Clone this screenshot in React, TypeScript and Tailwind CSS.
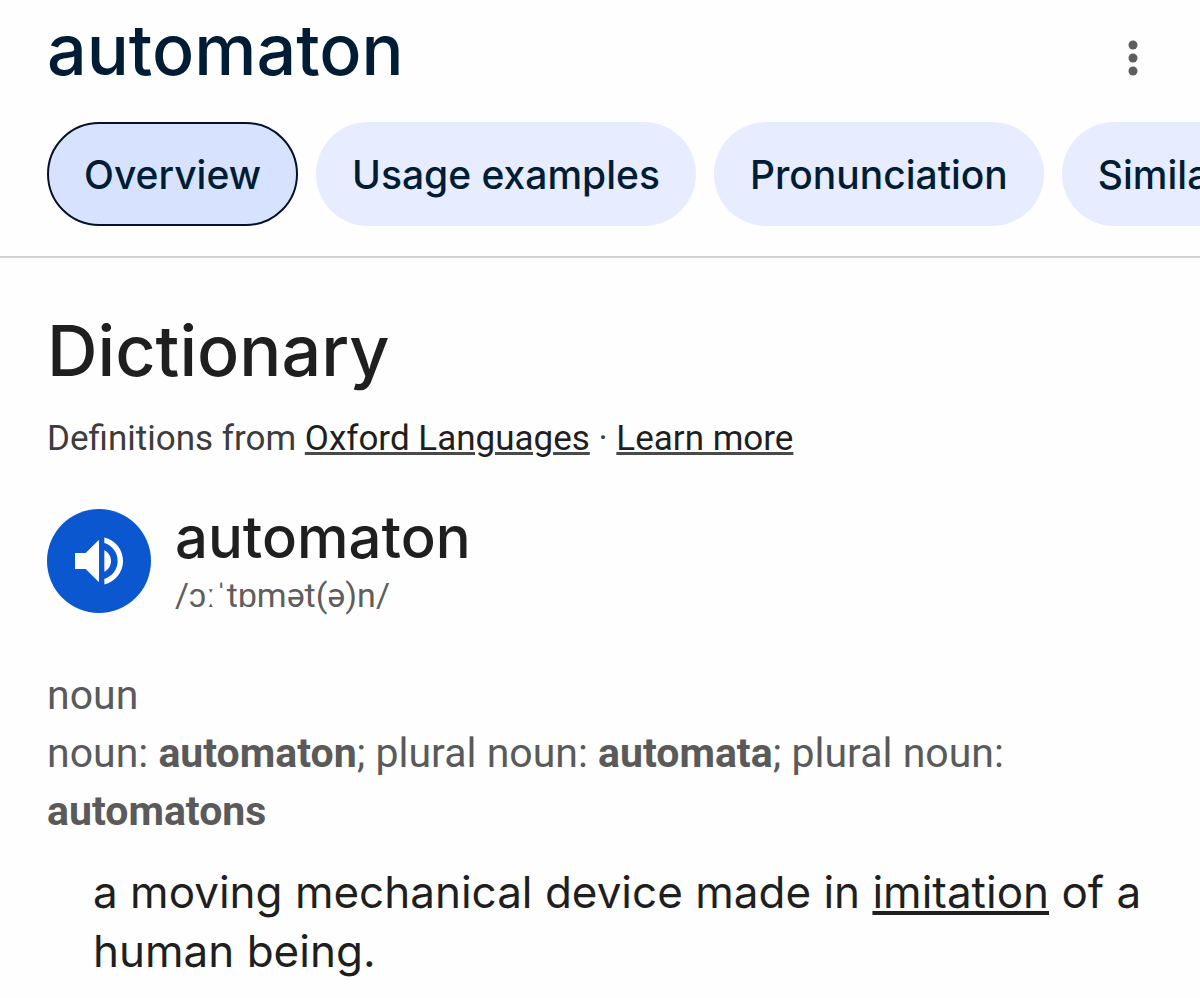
import React from "react";

const chips = ["Overview", "Usage examples", "Pronunciation", "Similar words"];

export default function App() {
  return (
    <div className="min-h-screen overflow-hidden bg-[#fefefe] font-['Roboto',sans-serif] text-[#1f1f1f]">
      <header className="border-b-2 border-[#d2d2d4] pb-[30px]">
        <div className="flex items-center justify-between pt-2 pr-[49px] pl-[47px]">
          <h1 className="font-['Inter',sans-serif] text-[70px] leading-[84px] font-medium text-[#001d35]">automaton</h1>
          <button aria-label="More options" className="mt-4 flex h-12 w-9 items-center justify-center text-[#5e5e5e]">
            <svg width="12" height="40" viewBox="0 0 12 40" fill="currentColor">
              <circle cx="6" cy="7" r="4.5" />
              <circle cx="6" cy="20" r="4.5" />
              <circle cx="6" cy="33" r="4.5" />
            </svg>
          </button>
        </div>
        <nav className="mt-[30px] flex gap-[18px] overflow-hidden pl-[47px]">
          {chips.map((chip, i) => (
            <button
              key={chip}
              className={
                i === 0
                  ? "h-[104px] shrink-0 rounded-full border-2 border-[#05112b] bg-[#d7e2fe] px-[35px] pt-[2px] font-['Inter',sans-serif] text-[39px] font-medium text-[#001d35]"
                  : "h-[104px] shrink-0 rounded-full bg-[#e7ecff] px-9 pt-[2px] font-['Inter',sans-serif] text-[39px] font-medium text-[#001d35]"
              }
            >
              {chip}
            </button>
          ))}
        </nav>
      </header>
      <main className="px-[47px]">
        <h2 className="mt-[51px] font-['Inter',sans-serif] text-[70px] leading-[84px] font-medium">Dictionary</h2>
        <p className="mt-6 text-[35px] leading-[44px] text-[#3c3c3c]">
          Definitions from <a href="#oxford" className="text-[#1f1f1f] underline decoration-[#4a4a4a] decoration-3">Oxford Languages</a> · <a href="#more" className="text-[#1f1f1f] underline decoration-[#4a4a4a] decoration-3">Learn more</a>
        </p>
        <section className="mt-11 flex items-center gap-6">
          <button aria-label="Listen" className="flex size-[104px] items-center justify-center rounded-full bg-[#0b57d0] text-white">
            <svg width="64" height="64" viewBox="0 0 24 24" fill="currentColor">
              <path d="M3 9v6h4l5 5V4L7 9H3zm13.5 3c0-1.77-1.02-3.29-2.5-4.03v8.05c1.48-.73 2.5-2.25 2.5-4.02zM14 3.23v2.06c2.89.86 5 3.54 5 6.71s-2.11 5.85-5 6.71v2.06c4.01-.91 7-4.49 7-8.77s-2.99-7.86-7-8.77z" />
            </svg>
          </button>
          <div>
            <h3 className="font-['Inter',sans-serif] text-[58px] leading-[64px] font-medium">automaton</h3>
            <p className="mt-1 text-[34px] leading-[44px] text-[#5e5e5e]">/ɔːˈtɒmət(ə)n/</p>
          </div>
        </section>
        <div className="mt-[49px] text-[41px] leading-[58px] text-[#5a5a5a]">
          <p>noun</p>
          <p>noun: <b>automaton</b>; plural noun: <b>automata</b>; plural noun: <b>automatons</b></p>
        </div>
        <p className="mt-[23px] ml-[46px] font-['Inter',sans-serif] text-[44px] leading-[59px]">
          a moving mechanical device made in <a href="#imitation" className="underline">imitation</a> of a human being.
        </p>
      </main>
    </div>
  );
}
